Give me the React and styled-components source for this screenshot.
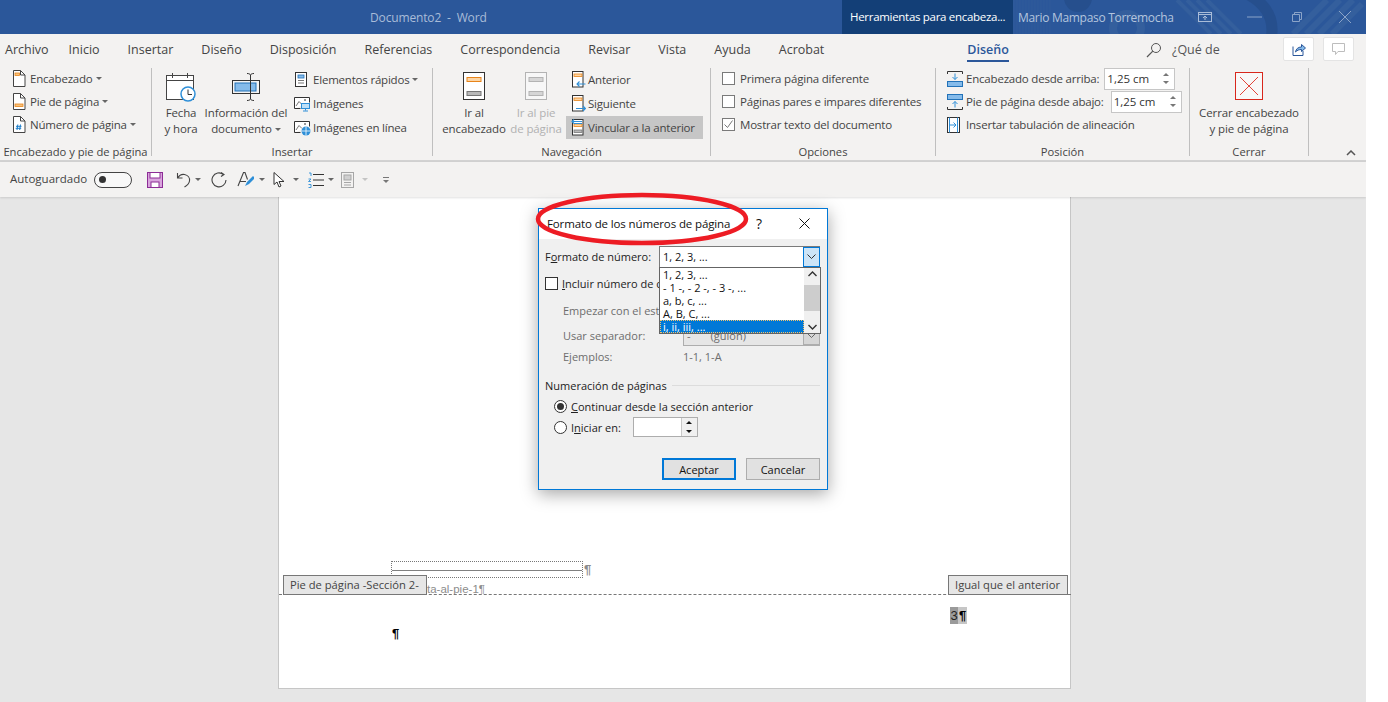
import React from 'react';
import styled, { createGlobalStyle } from 'styled-components';

const Global = createGlobalStyle`
  html, body { margin: 0; padding: 0; background: #fff; }
  body { font-family: "Open Sans", "Noto Sans", "Liberation Sans", sans-serif; font-size: 12px; color: #3b3b3b; }
  * { box-sizing: border-box; }
`;

const Window = styled.div`
  width: 1366px;
  height: 702px;
  position: relative;
  overflow: hidden;
  display: flex;
  flex-direction: column;
`;

/* title bar */
const TitleBar = styled.div`
  height: 34px;
  background: #2b579a;
  display: flex;
  align-items: center;
  padding-left: 370px;
  flex: none;
  position: relative;
`;
const DocTitle = styled.div`
  width: 472px;
  flex: none;
  color: #a9bcd8;
  font-size: 12px;
  letter-spacing: -0.15px;
  white-space: pre;
`;
const ToolsTab = styled.div`
  width: 171px;
  flex: none;
  height: 34px;
  background: #133f77;
  color: #fff;
  font-size: 11.5px;
  letter-spacing: -0.3px;
  padding-left: 8px;
  line-height: 33px;
  white-space: nowrap;
`;
const UserName = styled.div`
  width: 185px;
  flex: none;
  padding-left: 5px;
  color: #b4c5de;
  font-size: 12px;
  letter-spacing: -0.3px;
  white-space: nowrap;
  position: relative;
`;
const Pattern = styled.svg`
  position: absolute;
  left: 1013px;
  top: 0;
`;
const WinButtons = styled.div`
  display: flex;
  align-items: center;
  position: relative;
  flex: none;
  svg { display: block; }
`;
const WinBtn = styled.div`
  width: ${p => p.$w}px;
  margin-left: ${p => p.$ml || 0}px;
  display: flex;
  justify-content: center;
`;

/* tabs */
const TabRow = styled.div`
  height: 32px;
  background: #f3f2f1;
  display: flex;
  align-items: flex-start;
  gap: 28px;
  padding: 7px 0 0 5px;
  flex: none;
  position: relative;
  font-size: 12.5px;
`;
const Tab = styled.div`
  color: ${p => (p.$active ? '#2b579a' : '#444')};
  font-weight: ${p => (p.$active ? 600 : 400)};
  margin-left: ${p => p.$ml || 0}px;
  margin-right: ${p => p.$mr || 0}px;
  white-space: nowrap;
  line-height: 18px;
  height: 21px;
  border-bottom: ${p => (p.$active ? '2px solid #2b579a' : 'none')};
`;
const Search = styled.div`
  position: absolute;
  left: 1146px;
  top: 7px;
  display: flex;
  align-items: center;
  gap: 10px;
  color: #555;
  line-height: 18px;
`;
const TopButton = styled.div`
  position: absolute;
  left: ${p => p.$x}px;
  top: 3px;
  width: 31px;
  height: 24px;
  background: #fff;
  border: 1px solid #e4e4e4;
  border-radius: 2px;
  display: flex;
  align-items: center;
  justify-content: center;
`;

/* ribbon */
const Ribbon = styled.div`
  height: 96px;
  flex: none;
  background: #f3f2f1;
  border-bottom: 2px solid #d2d2d2;
  display: flex;
  position: relative;
`;
const Group = styled.div`
  width: ${p => p.$w}px;
  height: 88px;
  margin-top: 2px;
  border-right: 1px solid #bfbfbf;
  display: flex;
  flex-direction: column;
  flex: none;
`;
const GroupBody = styled.div`
  height: 75px;
  flex: none;
  display: flex;
  padding-left: ${p => p.$pl || 0}px;
`;
const GroupLabel = styled.div`
  height: 13px;
  text-align: center;
  font-size: 11.2px;
  line-height: 17px;
  color: #444;
  white-space: nowrap;
`;
const Rows = styled.div`
  display: flex;
  flex-direction: column;
  gap: ${p => p.$gap ?? 0}px;
  margin-left: ${p => p.$ml || 0}px;
  margin-top: ${p => p.$mt || 0}px;
`;
const SmallRow = styled.div`
  height: ${p => p.$h || 23}px;
  display: flex;
  align-items: center;
  gap: ${p => p.$gap ?? 4}px;
  padding: ${p => p.$pad || '0'};
  background: ${p => (p.$on ? '#c6c6c6' : 'transparent')};
  font-size: 11.5px;
  letter-spacing: -0.2px;
  color: #444;
  white-space: nowrap;
  svg { flex: none; display: block; }
`;
const Caret = styled.span`
  display: inline-block;
  width: 0;
  height: 0;
  border-left: 3px solid transparent;
  border-right: 3px solid transparent;
  border-top: 3px solid ${p => p.$c || '#666'};
  margin-left: ${p => p.$ml ?? 3}px;
  vertical-align: middle;
  flex: none;
`;
const LargeBtn = styled.div`
  width: ${p => p.$w}px;
  display: flex;
  flex-direction: column;
  align-items: center;
  padding-top: 4px;
  font-size: 11.5px;
  letter-spacing: -0.12px;
  line-height: 16px;
  text-align: center;
  white-space: nowrap;
  color: ${p => (p.$off ? '#b1b1b1' : '#444')};
  svg { display: block; margin-bottom: 3px; flex: none; }
`;
const RibCheck = styled.div`
  width: 13px;
  height: 13px;
  background: #fff;
  border: 1px solid #7a7a7a;
  flex: none;
  display: flex;
  align-items: center;
  justify-content: center;
`;
const SpinInput = styled.div`
  width: 71px;
  height: 22px;
  background: #fff;
  border: 1px solid #c6c6c6;
  color: #333;
  letter-spacing: 0;
  display: flex;
  align-items: center;
  justify-content: space-between;
  padding: 0 5px 0 2px;
  margin-left: ${p => p.$ml || 0}px;
`;
const SpinArrows = styled.div`
  display: flex;
  flex-direction: column;
  gap: 5px;
`;
const MiniTri = styled.span`
  width: 0;
  height: 0;
  border-left: 3px solid transparent;
  border-right: 3px solid transparent;
  ${p => (p.$down ? 'border-top: 3px solid #777;' : 'border-bottom: 3px solid #777;')}
`;
const Collapse = styled.svg`
  position: absolute;
  left: 1346px;
  top: 84px;
`;

/* quick access */
const Qat = styled.div`
  height: 35px;
  flex: none;
  background: #f3f2f1;
  display: flex;
  align-items: center;
  padding-left: 10px;
  font-size: 11.5px;
  color: #444;
  box-shadow: 0 1px 2px rgba(0, 0, 0, 0.12);
  position: relative;
  z-index: 1;
  svg { display: block; flex: none; }
`;
const QatLabel = styled.span`
  margin-top: -2px;
`;
const Toggle = styled.div`
  width: 38px;
  height: 16px;
  margin-left: 7px;
  border: 1px solid #444;
  border-radius: 8px;
  background: #f8f8f8;
  display: flex;
  align-items: center;
  padding-left: 4px;
  &::before { content: ''; width: 7px; height: 7px; border-radius: 50%; background: #333; }
`;
const QatItem = styled.div`
  margin-left: ${p => p.$ml}px;
  display: flex;
  align-items: center;
`;

/* document */
const Workspace = styled.div`
  flex: 1;
  background: #e6e6e6;
  padding-left: 278px;
`;
const Page = styled.div`
  width: 793px;
  height: 492px;
  background: #fff;
  border: 1px solid #c6c6c6;
  border-top: none;
  display: flex;
  flex-direction: column;
  justify-content: flex-end;
`;
const NoteBox = styled.div`
  width: 192px;
  height: 17px;
  margin-left: 112px;
  border: 1px dotted #777;
  position: relative;
  &::after { content: ''; position: absolute; left: 0; right: 0; top: 8px; border-top: 1px solid #808080; }
`;
const NoteMark = styled.span`
  position: absolute;
  left: 192px;
  top: 0;
  color: #8c8c8c;
  font-family: "Liberation Sans", sans-serif;
  font-size: 13px;
  font-weight: 700;
  line-height: 16px;
`;
const NoteText = styled.div`
  height: 16px;
  margin-left: 148px;
  color: #8c8c8c;
  font-family: "Liberation Sans", sans-serif;
  font-size: 11.5px;
  line-height: 23px;
`;
const FooterEdge = styled.div`
  border-bottom: 1px dashed #777;
  margin-right: -1px;
  position: relative;
`;
const FooterTag = styled.div`
  position: absolute;
  bottom: -1px;
  ${p => (p.$right ? 'right: 3px;' : 'left: 4px;')}
  height: 20px;
  padding: 0 7px 0 6px;
  background: #e6e6e6;
  border: 1px solid #777;
  font-size: 11.2px;
  line-height: 18px;
  color: #444;
  white-space: nowrap;
`;
const FooterBody = styled.div`
  height: 93px;
  padding-top: 12px;
  font-family: "Liberation Sans", sans-serif;
  font-size: 13px;
  color: #000;
`;
const PageNumberRow = styled.div`
  height: 17px;
  display: flex;
  justify-content: flex-end;
  padding-right: 103px;
`;
const NumField = styled.span`
  background: #9a9a9a;
  width: 8px;
  line-height: 17px;
  text-align: center;
  color: #222;
`;
const NumMark = styled.span`
  background: #c6c6c6;
  width: 9px;
  line-height: 17px;
  text-align: center;
  font-weight: 700;
`;
const EmptyPara = styled.div`
  margin: 2px 0 0 113px;
  line-height: 16px;
  font-weight: 700;
`;

/* dialog */
const Dialog = styled.div`
  position: absolute;
  left: 538px;
  top: 208px;
  width: 290px;
  height: 282px;
  background: #f0f0f0;
  border: 1px solid #0078d7;
  box-shadow: 0 4px 16px rgba(0, 0, 0, 0.35);
  font-family: "Open Sans", "Noto Sans", sans-serif;
  font-size: 11px;
  color: #222;
  z-index: 3;
`;
const DialogTitle = styled.div`
  height: 30px;
  background: #fff;
  display: flex;
  align-items: center;
  padding: 0 0 1px 8px;
  font-size: 11.5px;
  letter-spacing: -0.12px;
  color: #111;
  white-space: nowrap;
  span:first-child { width: 209px; }
  span:nth-child(2) { width: 30px; font-size: 14px; }
`;
const DialogBody = styled.div`
  padding: 7px 7px 0 6px;
  position: relative;
`;
const FieldRow = styled.div`
  height: ${p => p.$h}px;
  margin-top: ${p => p.$mt || 0}px;
  display: flex;
  align-items: center;
  padding-left: ${p => p.$pl || 0}px;
  color: ${p => (p.$off ? '#6d6d6d' : '#222')};
  white-space: nowrap;
`;
const FieldLabel = styled.span`
  width: ${p => p.$w}px;
  flex: none;
  u { text-underline-offset: 1px; }
`;
const Combo = styled.div`
  flex: 1;
  height: ${p => p.$h || 21}px;
  background: ${p => (p.$off ? '#e6e6e6' : '#fff')};
  border: 1px solid ${p => (p.$off ? '#adadad' : '#7a7a7a')};
  border-bottom: ${p => (p.$off ? '' : 'none')};
  display: flex;
  align-items: center;
  padding-left: 3px;
  color: ${p => (p.$off ? '#6d6d6d' : '#111')};
`;
const ComboText = styled.span`
  flex: 1;
  display: flex;
  gap: ${p => p.$gap || 0}px;
`;
const ComboBtn = styled.div`
  width: 17px;
  height: 100%;
  background: ${p => (p.$off ? '#d6d6d6' : '#cce4f7')};
  border: 1px solid ${p => (p.$off ? '#adadad' : '#0078d7')};
  margin-right: -1px;
  display: flex;
  align-items: center;
  justify-content: center;
`;
const DropList = styled.div`
  position: absolute;
  left: 120px;
  top: 28px;
  width: 162px;
  height: 67px;
  background: #fff;
  border: 1px solid #646464;
  z-index: 2;
  display: flex;
`;
const DropItems = styled.div`
  flex: 1;
  min-width: 0;
  color: #111;
`;
const DropItem = styled.div`
  height: 13px;
  line-height: 13px;
  padding-left: 3px;
  background: ${p => (p.$on ? '#0078d7' : 'transparent')};
  color: ${p => (p.$on ? '#fff' : '#111')};
  outline: ${p => (p.$on ? '1px dotted #f5c36b' : 'none')};
  outline-offset: -1px;
  white-space: nowrap;
`;
const DropScroll = styled.div`
  width: 16px;
  background: #f0f0f0;
  display: flex;
  flex-direction: column;
  align-items: center;
  justify-content: space-between;
  padding: 3px 0;
  position: relative;
`;
const DropThumb = styled.div`
  position: absolute;
  left: 0;
  right: 0;
  top: 17px;
  height: 26px;
  background: #cdcdcd;
`;
const DialogCheck = styled.div`
  width: 13px;
  height: 13px;
  border: 1px solid #333;
  background: #fff;
  margin-right: 4px;
  flex: none;
`;
const SectionHead = styled.div`
  height: 18px;
  margin-top: 13px;
  display: flex;
  align-items: center;
  gap: 5px;
  white-space: nowrap;
  &::after { content: ''; flex: 1; border-top: 1px solid #dcdcdc; }
`;
const Radio = styled.div`
  width: 13px;
  height: 13px;
  border-radius: 50%;
  border: 1px solid #333;
  background: #fff;
  margin-right: 4px;
  flex: none;
  display: flex;
  align-items: center;
  justify-content: center;
  &::before {
    content: '';
    width: 7px;
    height: 7px;
    border-radius: 50%;
    background: ${p => (p.$on ? '#333' : 'transparent')};
  }
`;
const StartInput = styled.div`
  width: 65px;
  height: 20px;
  background: #fff;
  border: 1px solid #adadad;
  margin-left: 12px;
  display: flex;
  justify-content: flex-end;
`;
const StartSpin = styled.div`
  width: 16px;
  border-left: 1px solid #c8c8c8;
  display: flex;
  flex-direction: column;
  align-items: center;
  justify-content: space-around;
  background: #f0f0f0;
`;
const TriBlack = styled.span`
  width: 0;
  height: 0;
  border-left: 3px solid transparent;
  border-right: 3px solid transparent;
  ${p => (p.$down ? 'border-top: 3px solid #111;' : 'border-bottom: 3px solid #111;')}
`;
const Buttons = styled.div`
  margin-top: 21px;
  display: flex;
  justify-content: flex-end;
  gap: 10px;
`;
const DlgButton = styled.div`
  width: 74px;
  height: 22px;
  background: #e1e1e1;
  border: ${p => (p.$primary ? '2px solid #0078d7' : '1px solid #adadad')};
  display: flex;
  align-items: center;
  justify-content: center;
  color: #111;
`;
const RedOval = styled.svg`
  position: absolute;
  left: 534px;
  top: 190px;
  z-index: 4;
  pointer-events: none;
`;

/* icons */
const PageIcon = ({ children }) => (
  <svg width="14" height="17" viewBox="0 0 14 17">
    <path d="M1.500.5h7l4.500 4.500v11.500h-11.500z" fill="#fff" stroke="#444" />
    <path d="M8.500.5v4.500h4.500" fill="none" stroke="#444" />
    {children}
  </svg>
);
const IconHeader = () => <PageIcon><rect x="3" y="3" width="4.500" height="2.500" fill="#f6c27d" stroke="#e8841a" strokeWidth=".8" /></PageIcon>;
const IconFooter = () => <PageIcon><rect x="3" y="11" width="8" height="2.500" fill="#f6c27d" stroke="#e8841a" strokeWidth=".8" /></PageIcon>;
const IconNumber = () => <PageIcon><path d="M5.800 8.500l-.8 5.500M8.500 8.500l-.8 5.500M4 10.300h5.500M3.700 12.300h5.500" stroke="#1b7cc9" fill="none" /></PageIcon>;

const IconCalendar = () => (
  <svg width="32" height="30" viewBox="0 0 32 30">
    <rect x="1.500" y="3.500" width="27" height="24" fill="#fff" stroke="#444" />
    <path d="M1.500 8.500h27M7.500 1v5M22.500 1v5" stroke="#444" fill="none" />
    <circle cx="23" cy="22" r="7" fill="#fff" stroke="#2e8fd8" strokeWidth="1.500" />
    <path d="M23 17.500V22.500h4" stroke="#333" fill="none" />
  </svg>
);
const IconDocInfo = () => (
  <svg width="30" height="30" viewBox="0 0 30 30">
    <rect x="1.500" y="8.500" width="27" height="13" fill="#f4f4f4" stroke="#333" />
    <rect x="4" y="11" width="21" height="8" fill="#85bbea" stroke="#2272b8" />
    <path d="M16 1.500c2 0 3 .5 3.500 1.500.5-1 1.500-1.500 3.500-1.500M16 28.500c2 0 3-.5 3.500-1.500.5 1 1.500 1.500 3.500 1.500M19.500 3v24" stroke="#333" fill="none" />
  </svg>
);
const IconQuickParts = () => (
  <svg width="14" height="17" viewBox="0 0 14 17">
    <rect x="1.500" y="1.500" width="11" height="14" fill="#fff" stroke="#333" />
    <rect x="4" y="4" width="6" height="3" fill="#85bbea" stroke="#2272b8" strokeWidth=".8" />
    <path d="M4 9.500h6M4 12h6" stroke="#777" />
  </svg>
);
const IconPictures = ({ online }) => (
  <svg width="17" height="16" viewBox="0 0 17 16">
    <path d="M.5 12.500V1.500h15v5M.5 12.500h6" fill="#fff" stroke="#333" />
    <path d="M2 10l3-4.500 3 3" fill="none" stroke="#777" />
    <circle cx="11" cy="4" r="1" fill="#777" />
    {online ? (
      <g>
        <circle cx="12" cy="11" r="4.500" fill="#2e8fd8" />
        <path d="M7.500 11h9M12 6.500v9" stroke="#fff" strokeWidth=".8" />
      </g>
    ) : (
      <g>
        <rect x="7.500" y="7.500" width="8" height="5" fill="#bfe0f7" stroke="#2e8fd8" />
        <path d="M11.500 12.500v2M9 15h5" stroke="#2e8fd8" />
      </g>
    )}
  </svg>
);
const IconGoto = ({ top, off }) => {
  const line = off ? '#b3b3b3' : '#333';
  return (
    <svg width="24" height="30" viewBox="0 0 24 30">
      <rect x="1.500" y=".5" width="21" height="27" fill={off ? '#f7f7f7' : '#fff'} stroke={line} />
      <rect x="5" y="5.500" width="14" height="4" fill={top && !off ? '#fcd5a5' : '#d6d6d6'} stroke={top && !off ? '#e8841a' : '#b3b3b3'} />
      <rect x="5" y="19.500" width="14" height="4" fill={off ? '#d6d6d6' : '#b9b9b9'} stroke={off ? '#b3b3b3' : '#777'} />
    </svg>
  );
};
const IconNav = ({ kind }) => (
  <svg width="15" height="17" viewBox="0 0 15 17">
    <rect x="1.500" y=".5" width="10.500" height="15.500" fill="#fff" stroke="#333" />
    <rect x="3" y={kind === 'link' ? 5 : 3} width="8" height="2.500" fill="#fcd5a5" stroke="#e8841a" strokeWidth=".8" />
    {kind === 'link' && <rect x="3" y="11" width="8" height="2.500" fill="#b9b9b9" stroke="#777" strokeWidth=".8" />}
    {kind === 'prev' && <path d="M14.500 13H6M8.500 10.500L6 13l2.500 2.500" fill="none" stroke="#2e8fd8" strokeWidth="1.100" />}
    {kind === 'next' && <path d="M5 13.500h9.500M12 11l2.500 2.500L12 16" fill="none" stroke="#2e8fd8" strokeWidth="1.100" />}
    {kind === 'link' && <path d="M11 2.500H1M3 .5L1 2.500l2 2M11 4.500H3" fill="none" stroke="#2e8fd8" strokeWidth="1.100" />}
  </svg>
);
const IconTopMargin = () => (
  <svg width="16" height="16" viewBox="0 0 16 16">
    <path d="M.5 3V.5h15V3" fill="none" stroke="#333" />
    <rect x=".5" y="10.500" width="15" height="5" fill="#85bbea" stroke="#2272b8" />
    <path d="M8 2.500v6M5.500 6L8 8.500 10.500 6" fill="none" stroke="#2e8fd8" />
  </svg>
);
const IconBottomMargin = () => (
  <svg width="16" height="16" viewBox="0 0 16 16">
    <path d="M.5 13v2.500h15V13" fill="none" stroke="#333" />
    <rect x=".5" y=".5" width="15" height="5" fill="#85bbea" stroke="#2272b8" />
    <path d="M8 13.500v-6M5.500 10L8 7.500 10.500 10" fill="none" stroke="#2e8fd8" />
  </svg>
);
const IconTab = () => (
  <svg width="14" height="16" viewBox="0 0 14 16">
    <rect x=".5" y=".5" width="12" height="15" fill="#fff" stroke="#333" />
    <path d="M2.500.5v15M10.500.5v15" stroke="#2e8fd8" />
    <path d="M3 8h6M6.500 5.500L9 8l-2.500 2.500" fill="none" stroke="#2e8fd8" />
  </svg>
);
const IconClose = () => (
  <svg width="28" height="30" viewBox="0 0 28 30">
    <rect x=".5" y=".5" width="27" height="27" fill="#f8f8f8" stroke="#d8271c" />
    <path d="M5 5l18 18M23 5L5 23" stroke="#e2453a" />
  </svg>
);

export default function App() {
  return (
    <Window>
      <Global />
      <TitleBar>
        <Pattern width="353" height="34" viewBox="0 0 353 34">
          <g fill="none" stroke="#3a659f" opacity=".6">
            <path d="M1 0v34M4 0v34M7 0v34M10 0v34M13 0v34M16 0v34M19 0v34M22 0v34M25 0v34M28 0v34M31 0v34M34 0v34M37 0v34" opacity=".6" />
            <circle cx="65" cy="-2" r="14" fill="#234a86" stroke="none" />
            <circle cx="114" cy="28" r="14" strokeWidth="8" />
            <path d="M236 -5c18 10 26 24 22 44" strokeWidth="11" stroke="#234a86" />
            <path d="M164 0l34 34M174 0l34 34M184 0l34 34M194 0l34 34" strokeWidth="4" />
            <path d="M280 34l34-34M293 34l34-34M306 34l34-34M319 34l30-30" strokeWidth="6" />
          </g>
        </Pattern>
        <DocTitle>Documento2  -  Word</DocTitle>
        <ToolsTab>Herramientas para encabeza...</ToolsTab>
        <UserName>Mario Mampaso Torremocha</UserName>
        <WinButtons>
          <WinBtn $w={14}>
            <svg width="14" height="10" viewBox="0 0 14 10">
              <rect x=".5" y=".5" width="13" height="9" fill="none" stroke="#a9bcd8" />
              <path d="M.5 2.500h13M7 8V4M5 6l2-2 2 2" fill="none" stroke="#a9bcd8" />
            </svg>
          </WinBtn>
          <WinBtn $w={46} $ml={19}>
            <svg width="15" height="2" viewBox="0 0 15 2"><path d="M0 1h15" stroke="#8ba4c8" /></svg>
          </WinBtn>
          <WinBtn $w={40}>
            <svg width="10" height="10" viewBox="0 0 10 10">
              <path d="M.5 2.500h7v7h-7zM2.500 2.500V.5h7v7h-2" fill="none" stroke="#8ba4c8" />
            </svg>
          </WinBtn>
          <WinBtn $w={46} $ml={5}>
            <svg width="14" height="14" viewBox="0 0 14 14"><path d="M1 1l12 12M13 1L1 13" stroke="#8ba4c8" /></svg>
          </WinBtn>
        </WinButtons>
      </TitleBar>

      <TabRow>
        <Tab $mr={-8}>Archivo</Tab>
        <Tab>Inicio</Tab>
        <Tab>Insertar</Tab>
        <Tab>Diseño</Tab>
        <Tab>Disposición</Tab>
        <Tab>Referencias</Tab>
        <Tab>Correspondencia</Tab>
        <Tab>Revisar</Tab>
        <Tab>Vista</Tab>
        <Tab>Ayuda</Tab>
        <Tab>Acrobat</Tab>
        <Tab $active $ml={115}>Diseño</Tab>
        <Search>
          <svg width="16" height="16" viewBox="0 0 16 16">
            <circle cx="10" cy="6" r="4.500" fill="none" stroke="#555" />
            <path d="M6.800 9.200L1 15" stroke="#555" strokeWidth="1.200" />
          </svg>
          ¿Qué de
        </Search>
        <TopButton $x={1283}>
          <svg width="14" height="14" viewBox="0 0 14 14">
            <path d="M1 4.500v9h10V9" fill="none" stroke="#2b579a" />
            <path d="M3.500 10c.5-3 2.500-5 6-5V2.500L13.500 6l-4 3.500V7.500c-2.500 0-4.500.8-6 2.500z" fill="#85bbea" stroke="#2b579a" />
          </svg>
        </TopButton>
        <TopButton $x={1323}>
          <svg width="13" height="13" viewBox="0 0 13 13">
            <path d="M.5.5h12v8H6L3.500 11.500V8.500H.5z" fill="none" stroke="#bdbdbd" />
          </svg>
        </TopButton>
      </TabRow>

      <Ribbon>
        <Group $w={152}>
          <GroupBody $pl={12}>
            <Rows $mt={-1}>
              <SmallRow><IconHeader />Encabezado<Caret $ml={-1} /></SmallRow>
              <SmallRow><IconFooter />Pie de página<Caret $ml={-1} /></SmallRow>
              <SmallRow><IconNumber />Número de página<Caret $ml={-1} /></SmallRow>
            </Rows>
          </GroupBody>
          <GroupLabel>Encabezado y pie de página</GroupLabel>
        </Group>

        <Group $w={281}>
          <GroupBody $pl={6}>
            <LargeBtn $w={46}>
              <IconCalendar />
              <span>Fecha</span>
              <span>y hora</span>
            </LargeBtn>
            <LargeBtn $w={84}>
              <IconDocInfo />
              <span>Información del</span>
              <span>documento<Caret /></span>
            </LargeBtn>
            <Rows $gap={1} $ml={6}>
              <SmallRow $gap={5}><IconQuickParts />Elementos rápidos<Caret $ml={-2} /></SmallRow>
              <SmallRow $gap={2}><IconPictures />Imágenes</SmallRow>
              <SmallRow $gap={2}><IconPictures online />Imágenes en línea</SmallRow>
            </Rows>
          </GroupBody>
          <GroupLabel>Insertar</GroupLabel>
        </Group>

        <Group $w={278}>
          <GroupBody $pl={9}>
            <LargeBtn $w={64}>
              <IconGoto top />
              <span>Ir al</span>
              <span>encabezado</span>
            </LargeBtn>
            <LargeBtn $w={60} $off>
              <IconGoto off />
              <span>Ir al pie</span>
              <span>de página</span>
            </LargeBtn>
            <Rows $gap={1}>
              <SmallRow $pad="0 8px 0 5px" $gap={2}><IconNav kind="prev" />Anterior</SmallRow>
              <SmallRow $pad="0 8px 0 5px" $gap={2}><IconNav kind="next" />Siguiente</SmallRow>
              <SmallRow $pad="0 8px 0 5px" $gap={2} $on><IconNav kind="link" />Vincular a la anterior</SmallRow>
            </Rows>
          </GroupBody>
          <GroupLabel>Navegación</GroupLabel>
        </Group>

        <Group $w={225}>
          <GroupBody $pl={11}>
            <Rows $mt={-1}>
              <SmallRow $gap={5}><RibCheck />Primera página diferente</SmallRow>
              <SmallRow $gap={5}><RibCheck />Páginas pares e impares diferentes</SmallRow>
              <SmallRow $gap={5}>
                <RibCheck>
                  <svg width="11" height="11" viewBox="0 0 11 11"><path d="M1.500 5.500l3 3 5-7" fill="none" stroke="#777" /></svg>
                </RibCheck>
                Mostrar texto del documento
              </SmallRow>
            </Rows>
          </GroupBody>
          <GroupLabel>Opciones</GroupLabel>
        </Group>

        <Group $w={254}>
          <GroupBody $pl={11}>
            <Rows $mt={-1}>
              <SmallRow $gap={3}><IconTopMargin />Encabezado desde arriba:<SpinInput $ml={2}>1,25 cm<SpinArrows><MiniTri /><MiniTri $down /></SpinArrows></SpinInput></SmallRow>
              <SmallRow $gap={3}><IconBottomMargin />Pie de página desde abajo:<SpinInput $ml={4}>1,25 cm<SpinArrows><MiniTri /><MiniTri $down /></SpinArrows></SpinInput></SmallRow>
              <SmallRow $gap={5}><IconTab />Insertar tabulación de alineación</SmallRow>
            </Rows>
          </GroupBody>
          <GroupLabel>Posición</GroupLabel>
        </Group>

        <Group $w={119}>
          <GroupBody>
            <LargeBtn $w={118}>
              <IconClose />
              <span>Cerrar encabezado</span>
              <span>y pie de página</span>
            </LargeBtn>
          </GroupBody>
          <GroupLabel>Cerrar</GroupLabel>
        </Group>

        <Collapse width="10" height="6" viewBox="0 0 10 6">
          <path d="M1 5l4-4 4 4" fill="none" stroke="#555" strokeWidth="1.500" />
        </Collapse>
      </Ribbon>

      <Qat>
        <QatLabel>Autoguardado</QatLabel>
        <Toggle />
        <QatItem $ml={15}>
          <svg width="16" height="16" viewBox="0 0 16 16">
            <rect x=".5" y=".5" width="15" height="15" fill="#d9a5dd" stroke="#8c2c96" />
            <rect x="3" y=".5" width="10" height="5.500" fill="#fff" stroke="#8c2c96" />
            <rect x="4" y="10" width="8" height="5.500" fill="#fff" stroke="#8c2c96" />
          </svg>
        </QatItem>
        <QatItem $ml={13}>
          <svg width="16" height="16" viewBox="0 0 16 16">
            <path d="M1.500 1v5h5M1.500 6c2-3 4.500-4 7-3.500 3.500.7 5.500 3.500 5 6.500-.4 2.500-2.500 4.500-5 6" fill="none" stroke="#444" strokeWidth="1.100" />
          </svg>
          <Caret $ml={3} />
        </QatItem>
        <QatItem $ml={10}>
          <svg width="17" height="17" viewBox="0 0 17 17">
            <path d="M10 1.500l3 2-3 2M12.500 3.500A7 7 0 1 0 15 9" fill="none" stroke="#444" strokeWidth="1.100" />
          </svg>
        </QatItem>
        <QatItem $ml={9}>
          <svg width="17" height="17" viewBox="0 0 17 17">
            <path d="M1 15L6.500 1.500h1.500l2.500 7M3 10.500h6" fill="none" stroke="#444" strokeWidth="1.100" />
            <path d="M16 5l-6 6-2 4 4-2 6-6z" fill="#2e8fd8" />
          </svg>
          <Caret $ml={5} />
        </QatItem>
        <QatItem $ml={8}>
          <svg width="13" height="16" viewBox="0 0 13 16">
            <path d="M1 .5v12l3-2.500 2 5 2-1-2-4.500h5z" fill="#fff" stroke="#333" />
          </svg>
          <Caret $ml={7} />
        </QatItem>
        <QatItem $ml={9}>
          <svg width="16" height="16" viewBox="0 0 16 16">
            <path d="M5 2.500h11M5 8h11M5 13.500h11" stroke="#333" />
            <path d="M1 1h2v3M.5 7h2.500l-2.500 2.500h2.500M.5 12.500h2.500v3H.5" fill="none" stroke="#2e8fd8" strokeWidth=".9" />
          </svg>
          <Caret $ml={4} />
        </QatItem>
        <QatItem $ml={7}>
          <svg width="14" height="16" viewBox="0 0 14 16">
            <rect x=".5" y=".5" width="12" height="15" fill="#f3f2f1" stroke="#a6a6a6" />
            <rect x="3" y="3" width="7" height="5" fill="#d0d0d0" stroke="#a6a6a6" />
            <path d="M3 10.500h7M3 13h7" stroke="#a6a6a6" />
          </svg>
          <Caret $ml={7} $c="#c4c4c4" />
        </QatItem>
        <QatItem $ml={15}>
          <svg width="6" height="6" viewBox="0 0 6 6">
            <path d="M0 .5h6" stroke="#777" />
            <path d="M0 3h6L3 6z" fill="#777" />
          </svg>
        </QatItem>
      </Qat>

      <Workspace>
        <Page>
          <NoteBox><NoteMark>¶</NoteMark></NoteBox>
          <NoteText>ta-al-pie-1¶</NoteText>
          <FooterEdge>
            <FooterTag>Pie de página -Sección 2-</FooterTag>
            <FooterTag $right>Igual que el anterior</FooterTag>
          </FooterEdge>
          <FooterBody>
            <PageNumberRow><NumField>3</NumField><NumMark>¶</NumMark></PageNumberRow>
            <EmptyPara>¶</EmptyPara>
          </FooterBody>
        </Page>
      </Workspace>

      <RedOval width="220" height="60" viewBox="0 0 220 60">
        <ellipse cx="108" cy="29" rx="104" ry="24" fill="none" stroke="#ed1c24" strokeWidth="4.500" />
      </RedOval>

      <Dialog>
        <DialogTitle>
          <span>Formato de los números de página</span>
          <span>?</span>
          <svg width="11" height="11" viewBox="0 0 11 11" style={{ marginLeft: 13 }}>
            <path d="M.5.5l10 10M10.500.5l-10 10" stroke="#111" />
          </svg>
        </DialogTitle>
        <DialogBody>
          <FieldRow $h={20}>
            <FieldLabel $w={114}>F<u>o</u>rmato de número:</FieldLabel>
            <Combo>
              <ComboText>1, 2, 3, ...</ComboText>
              <ComboBtn>
                <svg width="9" height="5" viewBox="0 0 9 5"><path d="M.5.5l4 4 4-4" fill="none" stroke="#333" /></svg>
              </ComboBtn>
            </Combo>
          </FieldRow>
          <DropList>
            <DropItems>
              <DropItem>1, 2, 3, ...</DropItem>
              <DropItem>- 1 -, - 2 -, - 3 -, ...</DropItem>
              <DropItem>a, b, c, ...</DropItem>
              <DropItem>A, B, C, ...</DropItem>
              <DropItem $on>i, ii, iii, ...</DropItem>
            </DropItems>
            <DropScroll>
              <svg width="9" height="6" viewBox="0 0 9 6"><path d="M.5 5l4-4 4 4" fill="none" stroke="#333" strokeWidth="1.400" /></svg>
              <DropThumb />
              <svg width="9" height="6" viewBox="0 0 9 6"><path d="M.5 1l4 4 4-4" fill="none" stroke="#333" strokeWidth="1.400" /></svg>
            </DropScroll>
          </DropList>
          <FieldRow $h={14} $mt={10}>
            <DialogCheck /><span><u>I</u>ncluir número de c</span>
          </FieldRow>
          <FieldRow $h={14} $pl={18} $off $mt={13}>Empezar con el est</FieldRow>
          <FieldRow $h={21} $pl={18} $off $mt={8}>
            <FieldLabel $w={120}>Usar separador:</FieldLabel>
            <Combo $off>
              <ComboText $gap={20}><span>-</span><span>(guión)</span></ComboText>
              <ComboBtn $off>
                <svg width="9" height="5" viewBox="0 0 9 5"><path d="M.5.5l4 4 4-4" fill="none" stroke="#666" /></svg>
              </ComboBtn>
            </Combo>
          </FieldRow>
          <FieldRow $h={14} $pl={18} $off $mt={3}>
            <FieldLabel $w={120}>Ejemplos:</FieldLabel>1-1, 1-A
          </FieldRow>
          <SectionHead>Numeración de páginas</SectionHead>
          <FieldRow $h={14} $pl={9} $mt={5}>
            <Radio $on /><span><u>C</u>ontinuar desde la sección anterior</span>
          </FieldRow>
          <FieldRow $h={20} $pl={9} $mt={4}>
            <Radio /><span>I<u>n</u>iciar en:</span>
            <StartInput>
              <StartSpin><TriBlack /><TriBlack $down /></StartSpin>
            </StartInput>
          </FieldRow>
          <Buttons>
            <DlgButton $primary>Aceptar</DlgButton>
            <DlgButton>Cancelar</DlgButton>
          </Buttons>
        </DialogBody>
      </Dialog>
    </Window>
  );
}
